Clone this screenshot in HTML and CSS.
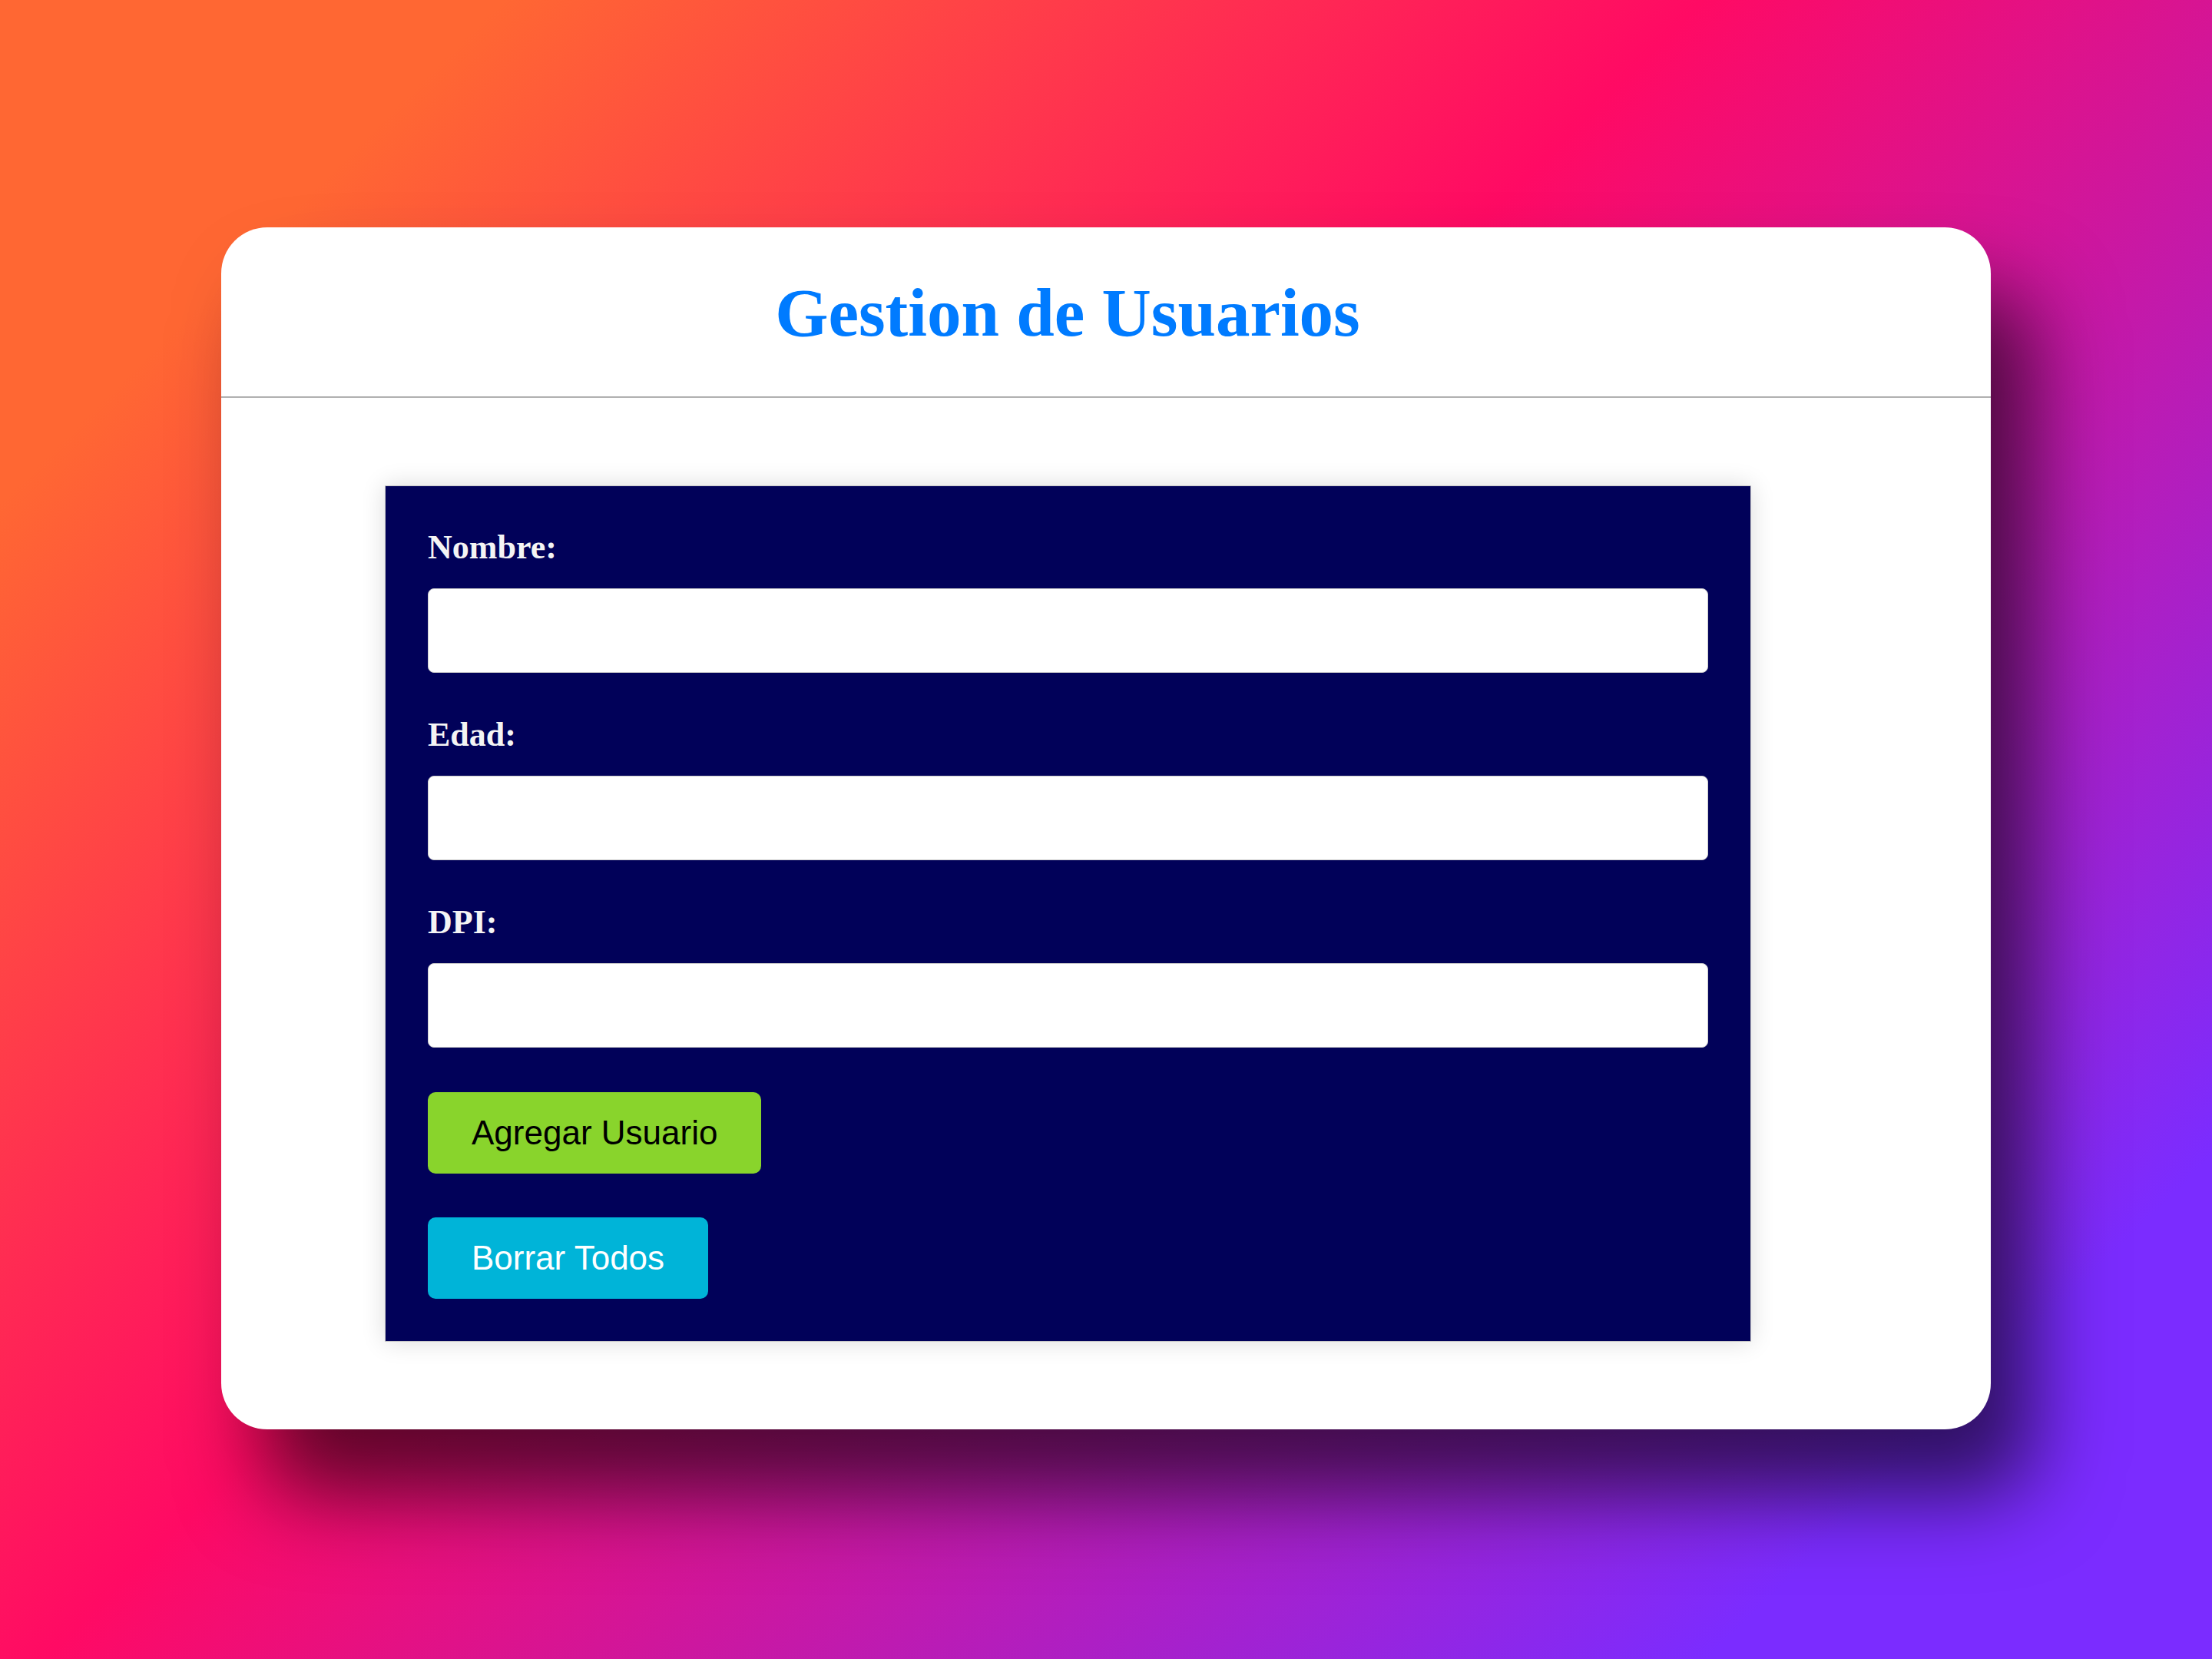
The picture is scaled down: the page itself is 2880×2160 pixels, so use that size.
FILE: index.html
```html
<!DOCTYPE html>
<html lang="es">
<head>
<meta charset="utf-8">
<title>Gestion de Usuarios</title>
<link rel="stylesheet" href="styles.css">
</head>
<body>
<div class="stage">
  <div class="card">
    <header class="card-header">
      <h1 class="title">Gestion de Usuarios</h1>
    </header>
    <main class="card-body">
      <form class="panel">
        <label class="field-label" for="nombre">Nombre:</label>
        <input class="field-input" id="nombre" type="text">
        <label class="field-label" for="edad">Edad:</label>
        <input class="field-input" id="edad" type="text">
        <label class="field-label" for="dpi">DPI:</label>
        <input class="field-input" id="dpi" type="text">
        <button class="btn btn-add" type="button">Agregar Usuario</button>
        <button class="btn btn-clear" type="button">Borrar Todos</button>
      </form>
    </main>
  </div>
</div>
</body>
</html>
```

FILE: styles.css
```css
html, body {
  margin: 0;
  padding: 0;
}

body {
  width: 2880px;
  height: 2160px;
  overflow: hidden;
  background: linear-gradient(135deg, #ff6733 0%, #ff6733 13%, #ff0a64 44%, #7b2cff 87%, #7b2cff 100%);
  font-family: "Liberation Serif", "Times New Roman", serif;
}

.stage {
  padding: 296px 0 0 288px;
}

.card {
  width: 2304px;
  height: 1565px;
  box-sizing: border-box;
  background: #ffffff;
  border-radius: 60px;
  box-shadow: 55px 85px 110px rgba(0, 0, 0, 0.62);
  display: flex;
  flex-direction: column;
}

.card-header {
  padding: 61px 100px 59px 0;
  border-bottom: 2px solid #b0b0b0;
  text-align: center;
}

.title {
  margin: 0;
  font-family: "Liberation Serif", "Times New Roman", serif;
  font-weight: bold;
  font-size: 89px;
  line-height: 100px;
  color: #007bff;
}

.card-body {
  padding: 114px 312px 113px 213px;
}

.panel {
  display: flex;
  flex-direction: column;
  align-items: flex-start;
  background: #010159;
  border: 1px solid #c8c8c8;
  box-shadow: 0 0 30px rgba(0, 0, 0, 0.14);
  padding: 55px;
}

.field-label {
  display: block;
  font-family: "Liberation Serif", "Times New Roman", serif;
  font-weight: bold;
  font-size: 44px;
  line-height: 50px;
  color: #f4f4f4;
  margin-bottom: 28px;
}

.field-input {
  display: block;
  width: 100%;
  height: 110px;
  box-sizing: border-box;
  margin: 0 0 56px 0;
  border: 1px solid #cccccc;
  border-radius: 8px;
  background: #ffffff;
  font-size: 40px;
}

.btn {
  display: block;
  margin: 0;
  border: none;
  border-radius: 10px;
  padding: 28px 57px;
  font-family: "Liberation Sans", Arial, sans-serif;
  font-size: 44px;
  line-height: 50px;
}

.btn-add {
  margin-top: 2px;
  background: #89d42c;
  color: #000000;
}

.btn-clear {
  margin-top: 57px;
  background: #00b4d8;
  color: #ffffff;
}
```
